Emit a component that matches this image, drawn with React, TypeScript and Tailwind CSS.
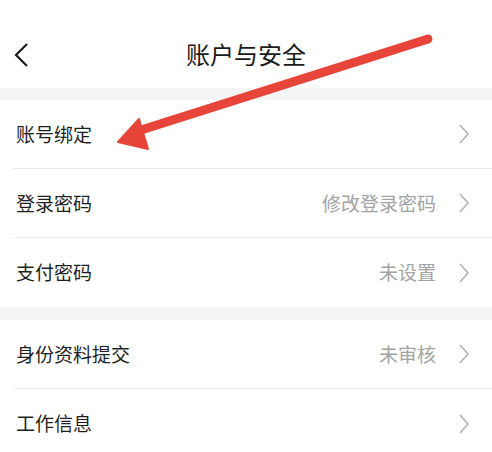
import React from 'react';

const rows: { label: string; value?: string; last?: boolean }[][] = [
  [{ label: '账号绑定' }, { label: '登录密码', value: '修改登录密码' }, { label: '支付密码', value: '未设置', last: true }],
  [{ label: '身份资料提交', value: '未审核' }, { label: '工作信息', last: true }],
];

const Chevron = () => (
  <svg width="12" height="22" viewBox="0 0 12 22" className="shrink-0">
    <polyline points="2,2 10,11 2,20" fill="none" stroke="#b3b3b3" strokeWidth="1.6" />
  </svg>
);

const Row = ({ label, value, last }: { label: string; value?: string; last?: boolean }) => (
  <div className="pl-[13px]">
    <div
      className={`flex h-[69px] items-center pl-[3px] pr-[22px] ${last ? '' : 'border-b border-[#ebebeb]'}`}
    >
      <span className="flex-1 text-[19px] text-[#1f1f1f]">{label}</span>
      {value && <span className="mr-[22px] text-[19px] text-[#a3a3a3]">{value}</span>}
      <Chevron />
    </div>
  </div>
);

const App: React.FC = () => {
  return (
    <div
      className="relative h-[452px] w-[492px] overflow-hidden bg-[#f5f5f5]"
      style={{ fontFamily: '"Noto Sans CJK SC", "Noto Sans", sans-serif' }}
    >
      <div className="relative flex h-[88px] items-center justify-center bg-white">
        <svg width="16" height="26" viewBox="0 0 16 26" className="absolute left-[13px] top-[42px]">
          <polyline points="14,2 3,13 14,24" fill="none" stroke="#1a1a1a" strokeWidth="2.2" />
        </svg>
        <span className="pt-[20px] text-[24px] text-[#1a1a1a]">账户与安全</span>
      </div>

      <div className="mt-[12px] bg-white">
        {rows[0].map((r) => (
          <Row key={r.label} {...r} />
        ))}
      </div>
      <div className="mt-[13px] bg-white">
        {rows[1].map((r) => (
          <Row key={r.label} {...r} />
        ))}
      </div>

      {/* red annotation arrow */}
      <svg className="pointer-events-none absolute left-0 top-0" width="492" height="452" viewBox="0 0 492 452">
        <line x1="428" y1="39" x2="138" y2="131" stroke="#e8453a" strokeWidth="9" strokeLinecap="round" />
        <polygon points="118,142 139,119 148,149" fill="#e8453a" stroke="#e8453a" strokeWidth="2" strokeLinejoin="round" />
      </svg>
    </div>
  );
};

export default App;
